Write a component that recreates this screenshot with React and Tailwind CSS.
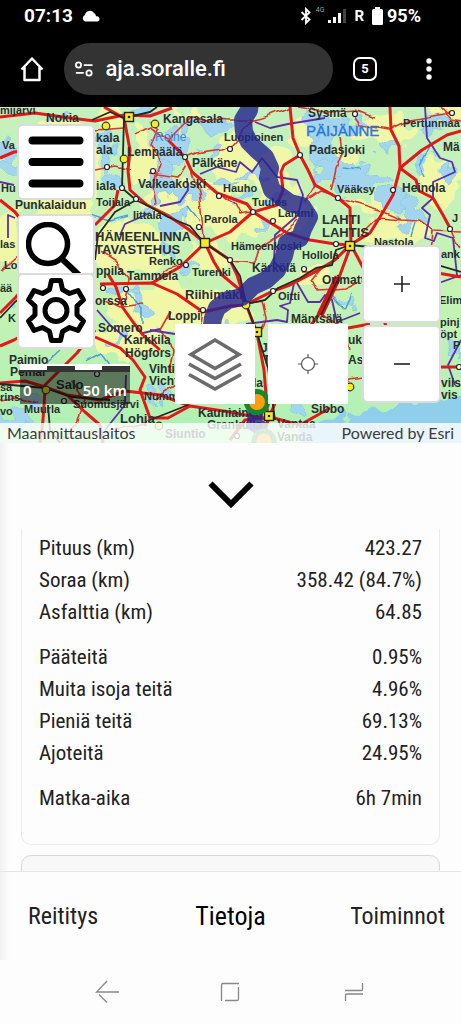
import React from "react";

const patches = [
  [190, 205, 45, 22], [232, 165, 24, 30], [275, 180, 22, 30], [180, 310, 70, 26], [130, 250, 40, 26], [395, 230, 38, 14],
  [385, 130, 34, 15], [60, 175, 40, 60], [143, 155, 12, 30], [440, 185, 20, 22], [290, 215, 22, 18],
  [240, 220, 34, 14], [302, 132, 14, 18], [125, 340, 34, 20], [312, 275, 16, 10], [445, 110, 24, 9], [8, 240, 12, 30],
  [215, 260, 24, 16], [110, 120, 14, 8], [345, 160, 12, 10], [195, 112, 18, 5], [370, 205, 18, 9], [110, 230, 12, 14],
];

const lakes = [
  [172, 150, 17, 21], [205, 125, 26, 7], [162, 180, 12, 20], [190, 195, 20, 7], [222, 185, 14, 6],
  [250, 178, 12, 4], [323, 150, 12, 22], [333, 172, 20, 15], [316, 124, 14, 15], [365, 180, 28, 9],
  [393, 202, 18, 10], [410, 212, 12, 13], [350, 124, 24, 6], [435, 125, 14, 5], [386, 148, 6, 6], [422, 168, 5, 8],
  [425, 160, 9, 4], [12, 165, 12, 8], [8, 150, 10, 7], [110, 150, 7, 22], [112, 180, 9, 7],
  [100, 135, 10, 5], [138, 298, 7, 12], [128, 291, 14, 3], [115, 340, 8, 3], [172, 222, 12, 9],
  [168, 246, 4, 13], [190, 272, 12, 3], [275, 196, 8, 4], [262, 225, 6, 3], [450, 170, 4, 7],
  [30, 400, 12, 5], [12, 420, 20, 6], [150, 402, 8, 4], [164, 392, 5, 9], [305, 407, 8, 5],
  [345, 303, 5, 4], [455, 350, 6, 12], [140, 112, 10, 4], [60, 118, 14, 3], [225, 330, 5, 7], [15, 305, 4, 5],
  [210, 150, 8, 3], [236, 200, 6, 3], [148, 210, 6, 4], [185, 212, 8, 5], [340, 200, 5, 3], [365, 165, 5, 3], [215, 340, 4, 4],
];

const majorRoads = [
  "M0 117L35 113L70 118L95 121L124 115L150 116L172 108",
  "M104 107L124 118L130 150L128 170L130 190L147 205L167 215L188 229L205 243L230 260L237 275L246 304L257 333L264 370L268 420L262 443",
  "M205 243L230 232L253 212L277 205L283 190L281 172L284 165L300 155L293 138L290 107",
  "M168 140L185 157L192 172L217 193L247 204L253 212L287 233L310 240L335 244L350 245L370 233L383 212L393 195L400 168L422 150L447 135L461 131",
  "M390 107L391 130L399 146L400 168L416 180L419 191L433 198L443 215L450 228",
  "M300 155L308 170L315 185L338 198L350 208L351 245L340 275L320 313L300 340L285 380L270 415",
  "M351 245L375 290L390 340",
  "M350 245L335 260L315 272L290 285L273 291L245 305L230 306L203 312L177 294L152 283L100 284",
  "M205 243L180 267L152 283",
  "M205 243L214 262L222 275L240 290L245 305",
  "M0 383L25 381L45 387L67 395L100 400L125 391L160 395L190 406L230 412L270 420",
  "M43 387L60 370L77 353L95 330", "M45 390L43 420L40 443", "M0 313L16 297L32 278",
  "M0 200L15 212L30 232", "M0 158L14 152L30 150", "M108 274L116 287L123 308L133 322L143 335L160 350",
  "M95 337L120 348L133 360L145 377L140 390L150 418L168 418L190 406",
  "M0 346L14 340L30 331", "M420 270L461 277", "M425 367L461 367", "M348 328L370 324",
  "M95 225L115 205L118 190", "M230 440L245 420L270 417L300 425L330 408",
  "M67 395L85 412L100 425L103 443",
];

const minorRoads = [
  "M185 157L195 153L222 149L232 145L252 120L265 117L290 107", "M192 172L199 190L202 220L205 243",
  "M150 122L158 130L152 146L160 165L153 185L156 205", "M150 174L178 178L186 165",
  "M338 198L383 212L402 220L420 221L433 230L461 231", "M340 137L342 152L336 168L331 192",
  "M315 185L305 202L320 192L338 198", "M230 260L255 262L261 248L282 234L298 220",
  "M350 245L378 218L402 220", "M355 115L362 125L390 130L410 120L450 113",
  "M100 252L115 262L128 278L125 300", "M222 195L235 205L240 215L250 213", "M152 283L168 270L180 267",
  "M245 305L262 300L266 318L262 330L250 335", "M303 270L320 270L312 280L318 292L345 290L360 283",
  "M20 255L12 262L0 270", "M135 135L150 128L168 140", "M95 170L115 166L130 170", "M95 130L124 128",
  "M170 312L160 330L174 350L170 372", "M62 443L75 425L85 400L70 380", "M155 398L175 385L180 360",
  "M335 390L350 380L362 378", "M300 107L330 112L355 110L375 118", "M432 230L430 250L420 262",
  "M0 400L15 398L38 404", "M110 430L140 424L152 418", "M203 310L200 330L180 345", "M440 107L452 120L461 122",
  "M320 313L345 330L350 350", "M450 228L455 240L461 248", "M168 140L190 118L230 120L252 120", "M102 300L118 308L145 305",
];

const rails = [
  "M124 118L122 188L136 200L150 207L168 217L190 226L200 238L212 248L230 260L240 276L246 304L256 330L268 368L275 420",
  "M136 200L115 212L98 235L95 260", "M246 304L265 300L278 288L300 278L316 268L332 265L336 250L350 245L380 248L461 272",
  "M0 384L45 388L72 397L110 400", "M0 318L15 302L30 290", "M48 405L50 430L60 443", "M150 420L188 405", "M92 120L110 112L124 118L150 112L157 107",
];

const borders = [
  "M255 122L270 128L288 124L325 118", "M200 174L217 167L236 172L240 162L252 172L262 158L277 177L297 180L303 195L298 215L275 235L274 262L283 270",
  "M425 107L427 138L440 158L452 162L455 172L433 182L433 198L422 208L430 215L425 238L434 241L437 233L453 238L457 275",
  "M0 182L14 185", "M8 238L8 215L15 218", "M150 330L175 334", "M246 324L277 320L287 322L288 310L280 306L290 303L294 283",
  "M297 283L308 302L320 302L325 295L332 300L337 322L360 313", "M97 310L110 325L125 337", "M120 235L125 224L150 213", "M160 206L180 202L188 190L187 178",
  "M143 333L160 329", "M461 340L448 365L455 385", "M105 430L125 405L126 375", "M425 288L461 275",
];

const streams = [
  "M88 214L110 220L128 215", "M343 168L360 170", "M188 207L200 222", "M127 290L143 310L143 325",
  "M430 145L420 165L424 175", "M415 222L411 235", "M330 295L345 310L352 295", "M40 370L60 352", "M85 362L100 354L112 370",
];

const smallLabels = [
  [0, 114, "mijärvi"], [2, 149, "Va"], [1, 192, "Hu"], [0, 248, "las"], [4, 269, "Lo"], [0, 292, "ää"], [8, 322, "K"],
  [224, 141, "Luopioinen"], [223, 192, "Hauho"], [252, 206, "Tuulos"], [278, 217, "Lammi"], [204, 223, "Parola"],
  [133, 219, "Iittala"], [96, 206, "Toijala"], [231, 250, "Hämeenkoski"], [192, 276, "Turenki"], [149, 265, "Renko"],
  [278, 300, "Oitti"], [337, 193, "Vääksy"], [374, 246, "Nastola"], [302, 259, "Hollola"], [452, 222, "J"], [441, 258, "ank"],
  [144, 400, "Nummela"], [73, 408, "Suomusjärvi"], [24, 413, "Muurla"], [403, 127, "Pertunmaa"], [439, 304, "Elim"],
  [440, 338, "öpt"], [440, 326, "pinj"], [453, 349, "P"], [0, 391, "sa"], [0, 401, "rins"], [0, 415, "vo"],
];

const largeLabels = [
  [46, 122, "Nokia"], [163, 123, "Kangasala"], [127, 156, "Lempäälä"], [192, 167, "Pälkäne"], [138, 188, "Valkeakoski"],
  [15, 209, "Punkalaidun"], [96, 142, "kala"], [96, 154, "ala"], [96, 190, "iala"], [96, 275, "ppila"], [252, 272, "Kärkölä"],
  [127, 280, "Tammela"], [95, 305, "orssa"], [168, 320, "Loppi"], [291, 323, "Mäntsälä"], [322, 284, "Orimattila"],
  [98, 332, "Somero"], [124, 344, "Karkkila"], [125, 357, "Högfors"], [149, 373, "Vihti"], [149, 385, "Vichtis"],
  [9, 364, "Paimio"], [10, 376, "Pemar"], [198, 417, "Kauniainen"], [207, 429, "Grankulla"],
  [261, 352, "Jä"], [263, 364, "Tu"], [253, 387, "la"], [311, 413, "Sibbo"], [348, 344, "uk"], [348, 364, "As"],
  [308, 117, "Sysmä"], [309, 154, "Padasjoki"], [443, 151, "Mä"], [402, 192, "Heinola"],
  [441, 387, "viis"], [441, 399, "vis"], [165, 438, "Siuntio"], [277, 428, "Vantaa"], [277, 441, "Vanda"],
];

const yellowTowns = [[106, 126], [155, 124], [124, 159], [46, 390], [246, 305], [159, 426], [350, 387]];
const whiteTowns = [[122, 188], [136, 199], [153, 171], [107, 167], [185, 157], [230, 149], [219, 196], [253, 212], [273, 221], [199, 227], [230, 260], [186, 265], [203, 310], [273, 291], [103, 288], [126, 289], [300, 155], [338, 198], [393, 190], [336, 244], [450, 229], [355, 114], [452, 113], [304, 269], [64, 401], [97, 374], [237, 436], [459, 367]];
const squares = [[129, 117], [205, 243], [350, 246], [257, 332], [269, 416]];

function MapCanvas() {
  return (
    <svg className="block h-full w-full" viewBox="0 107 461 336" preserveAspectRatio="xMidYMid slice" role="img" aria-label="Reittikartta">
      <defs>
        <filter id="coast" x="-20%" y="-20%" width="140%" height="140%" colorInterpolationFilters="sRGB">
          <feTurbulence type="fractalNoise" baseFrequency="0.05" numOctaves="2" seed="7" />
          <feDisplacementMap in="SourceGraphic" scale="34" xChannelSelector="R" yChannelSelector="G" />
        </filter>
        <filter id="bend" colorInterpolationFilters="sRGB">
          <feTurbulence type="fractalNoise" baseFrequency="0.06" numOctaves="1" seed="3" />
          <feDisplacementMap in="SourceGraphic" scale="8" xChannelSelector="R" yChannelSelector="G" />
        </filter>
        <linearGradient id="land" x1="0" y1="0" x2="0" y2="1">
          <stop offset="0" stopColor="#c4f0bd" />
          <stop offset="0.55" stopColor="#c6f3b4" />
          <stop offset="1" stopColor="#aef0b4" />
        </linearGradient>
      </defs>
      <rect x="0" y="107" width="461" height="336" fill="url(#land)" />
      <g filter="url(#coast)">
        {patches.map(([x, y, rx, ry], i) => <ellipse key={i} cx={x} cy={y} rx={rx} ry={ry} fill="#f0f8a8" />)}
        {lakes.map(([x, y, rx, ry], i) => <ellipse key={i} cx={x} cy={y} rx={rx} ry={ry} fill="#a3d6ee" stroke="#84c6e6" strokeWidth="0.8" />)}
        <path d="M480 392L430 400L405 400L385 412L365 406L350 418L335 413L330 423L300 430L290 470H490Z" fill="#8fcfec" />
      </g>
      <g fill="none" strokeLinejoin="round" filter="url(#bend)">
        {streams.map((d) => <path key={d} d={d} stroke="#4d9fd8" strokeWidth="1.5" />)}
        {minorRoads.map((d) => <path key={d} d={d} stroke="#e0342a" strokeWidth="1.6" />)}
      </g>
      <g fill="none" strokeLinejoin="round">
        {borders.map((d) => <path key={d} d={d} stroke="#5a2fa8" strokeWidth="1.8" />)}
        {majorRoads.map((d) => <path key={d} d={d} stroke="#e41818" strokeWidth="3" />)}
        {rails.map((d) => <path key={d} d={d} stroke="#222b22" strokeWidth="1.8" />)}
        <path d="M338 277L320 315" stroke="#d41414" strokeWidth="7" />
        <path d="M339 277L321 315" stroke="#222" strokeWidth="1.5" />
      </g>
      {whiteTowns.map(([x, y], i) => <circle key={i} cx={x} cy={y} r="2.5" fill="#fff" stroke="#222" strokeWidth="1.2" />)}
      {yellowTowns.map(([x, y], i) => <circle key={i} cx={x} cy={y} r="3.8" fill="#f5ec1c" stroke="#333" strokeWidth="1.2" />)}
      {squares.map(([x, y], i) => (
        <g key={i}>
          <rect x={x - 4.5} y={y - 4.5} width="9" height="9" fill="#f7e91f" stroke="#222" strokeWidth="1.4" />
          {i !== 1 && <circle cx={x} cy={y} r="1.3" fill="#222" />}
        </g>
      ))}
      <g fontFamily="Liberation Sans, Arial, sans-serif" fontWeight="700" fill="#2a2e30">
        <g fontSize="11">{smallLabels.map(([x, y, t]) => <text key={`${t}${x}-${y}`} x={x} y={y}>{t}</text>)}</g>
        <g fontSize="12">{largeLabels.map(([x, y, t]) => <text key={`${t}${x}-${y}`} x={x} y={y}>{t}</text>)}</g>
        <g fontSize="13">
          <text x="95" y="241">HÄMEENLINNA</text>
          <text x="95" y="254">TAVASTEHUS</text>
          <text x="322" y="224">LAHTI</text>
          <text x="322" y="237">LAHTIS</text>
          <text x="56" y="389">Salo</text>
          <text x="185" y="299">Riihimäki</text>
          <text x="120" y="423">Lohja</text>
        </g>
        <text x="306" y="136" fontSize="15" fontWeight="400" fill="#2b74e0" stroke="#2b74e0" strokeWidth="0.4">PÄIJÄNNE</text>
        <text x="155" y="141" fontSize="12" fontWeight="400" fill="#3b83dc">Roine</text>
      </g>
      <path
        d="M251 95L249 110L243 120L244 132L249 142L257 150L265 157L270 168L268 178L272 190L279 195L290 203L302 206L309 217L303 229L300 238L287 243L284 256L277 270L266 280L253 286L242 297L228 300L217 308L213 318L211 332"
        fill="none" stroke="#25258f" strokeOpacity="0.82" strokeWidth="18" strokeLinejoin="round"
      />
      <path d="M257 404L254 424L264 430" fill="none" stroke="#25258f" strokeOpacity="0.8" strokeWidth="15" />
      <circle cx="257" cy="402" r="10.5" fill="#ff9d12" stroke="#128a2c" strokeWidth="5" />
      <circle cx="264" cy="441" r="10" fill="#ffb22e" stroke="#3aa34a" strokeWidth="5" />
    </svg>
  );
}

const groups = [
  [["Pituus (km)", "423.27"], ["Soraa (km)", "358.42 (84.7%)"], ["Asfalttia (km)", "64.85"]],
  [["Pääteitä", "0.95%"], ["Muita isoja teitä", "4.96%"], ["Pieniä teitä", "69.13%"], ["Ajoteitä", "24.95%"]],
  [["Matka-aika", "6h 7min"]],
];

const mapButton = "flex items-center justify-center bg-white text-black";
const framed = "rounded-md border-2 border-[#dcdcdc]";

function StatusBar() {
  return (
    <div className="flex h-8 items-center justify-between pr-10 pl-6 text-[19px] leading-6 font-bold">
      <div className="flex items-center gap-2">
        <span>07:13</span>
        <svg width="20" height="14" viewBox="0 0 20 14" fill="#fff" aria-hidden="true">
          <path d="M4 12.500a3.500 3.500 0 0 1 0-6.500A5 5 0 0 1 13 4a4 4 0 0 1 2 3.300A2.700 2.700 0 0 1 16.500 12.500Z" />
        </svg>
      </div>
      <div className="flex items-center gap-1">
        <svg width="12" height="18" viewBox="0 0 12 18" fill="none" stroke="#fff" strokeWidth="1.800" aria-hidden="true">
          <path d="M1.500 5l8 7.500L6 16V2l3.500 3.500-8 7.500" />
        </svg>
        <span className="self-start text-[7px] leading-3 font-normal text-gray-400">4G</span>
        <svg width="18" height="14" viewBox="0 0 18 14" aria-hidden="true">
          <path d="M0 11h3v3H0zM5 8h3v6H5zM10 4h3v10h-3z" fill="#fff" />
          <path d="M15 0h3v14h-3z" fill="#444" />
        </svg>
        <span className="px-1 text-[15px]">R</span>
        <svg width="11" height="18" viewBox="0 0 11 18" fill="#fff" aria-hidden="true">
          <path d="M3 0h5v2h1.500A1.500 1.500 0 0 1 11 3.500v13A1.500 1.500 0 0 1 9.500 18h-8A1.500 1.500 0 0 1 0 16.500v-13A1.500 1.500 0 0 1 1.500 2H3z" />
        </svg>
        <span className="text-[18px]">95%</span>
      </div>
    </div>
  );
}

function BrowserBar() {
  return (
    <div className="flex items-center py-[11px] pr-5 pl-5">
      <button type="button" aria-label="Koti" className="flex w-6 justify-center">
        <svg width="24" height="26" viewBox="0 0 24 26" fill="none" stroke="#fff" strokeWidth="2.500" strokeLinejoin="round">
          <path d="M1.500 13.500L12 2.500l10.500 11M4.500 11v13h15V11" />
        </svg>
      </button>
      <div className="ml-5 flex h-[52px] flex-1 items-center gap-3 rounded-full bg-[#333] px-[11px]">
        <svg width="21" height="18" viewBox="0 0 21 18" fill="none" stroke="#fff" strokeWidth="2" aria-hidden="true">
          <circle cx="4" cy="4.500" r="3" /><path d="M10 4.500h10M1 13.500h9" /><circle cx="16" cy="13.500" r="3" />
        </svg>
        <input aria-label="Osoite" defaultValue="aja.soralle.fi" className="w-full min-w-0 bg-transparent text-[22px] leading-7 font-medium outline-none" />
      </div>
      <button type="button" aria-label="Välilehdet" className="ml-5 flex size-6 items-center justify-center rounded-[7px] border-2 border-white text-[13px] leading-4 font-bold">5</button>
      <button type="button" aria-label="Valikko" className="ml-10 flex w-6 justify-center">
        <svg width="6" height="22" viewBox="0 0 6 22" fill="#fff"><circle cx="3" cy="3" r="2.700" /><circle cx="3" cy="11" r="2.700" /><circle cx="3" cy="19" r="2.700" /></svg>
      </button>
    </div>
  );
}

export default function App() {
  return (
    <div className="flex min-h-screen flex-col bg-[#fdfdfd] font-['Roboto',sans-serif] text-[#222]">
      <header className="bg-black pb-px text-white">
        <StatusBar />
        <BrowserBar />
      </header>

      <section className="relative h-[336px] overflow-hidden">
        <MapCanvas />
        <div className="absolute top-[17px] left-[17px] flex flex-col">
          <button type="button" aria-label="Avaa valikko" className={`${mapButton} ${framed} h-[76px] w-[78px]`}>
            <svg width="56" height="54" viewBox="0 0 56 54" stroke="#000" strokeWidth="8" strokeLinecap="round"><path d="M4.500 5.500h47M4.500 27h47M4.500 48.500h47" /></svg>
          </button>
          <button type="button" aria-label="Haku" className="mt-[14px] flex h-[59px] w-[78px] items-start justify-center overflow-hidden rounded-t-md border-2 border-b-0 border-[#dcdcdc] bg-white pt-[6px]">
            <svg width="60" height="58" viewBox="0 0 60 58" fill="none" stroke="#000" strokeWidth="5.500"><circle cx="22" cy="22" r="19.500" /><path d="M35 36L54 54" strokeWidth="6" /></svg>
          </button>
          <button type="button" aria-label="Asetukset" className={`${mapButton} ${framed} h-[76px] w-[78px]`}>
            <svg width="66" height="68" viewBox="0 0 66 68" fill="none" stroke="#000" strokeWidth="5" strokeLinejoin="round">
              <path d="M28.500 3.500h9l2 9 7 4 8.500-3 5.500 9.500-6.500 6v9l6.500 6-5.500 9.500-8.500-3-7 4-2 9h-9l-2-9-7-4-8.500 3-5.500-9.500 6.500-6v-9l-6.500-6L11 13.500l8.500 3 7-4z" />
              <circle cx="33" cy="33.500" r="11" />
            </svg>
          </button>
        </div>
        <div className="absolute top-[257px] left-5 w-[110px]">
          <svg className="block h-2 w-full" viewBox="0 0 110 8" preserveAspectRatio="none" aria-hidden="true">
            <path d="M0 0h110v8H0z" fill="#333" />
            <path d="M0 0h110v2H0zM0 2h27v4H0zM55 2h27v4H55z" fill="#fff" />
          </svg>
          <div className="flex h-8 items-center justify-between bg-black/50 px-[3px] pt-1 font-['Noto_Sans',sans-serif] text-[15px] leading-5 font-semibold text-white"><span>0</span><span>50 km</span></div>
        </div>
        <div className="absolute right-[113px] bottom-[39px] flex gap-[13px]">
          <button type="button" aria-label="Karttatasot" className={`${mapButton} size-20`}>
            <svg width="56" height="54" viewBox="0 0 56 54" fill="none" stroke="#6b6b6b" strokeWidth="3.500"><path d="M28 3L52 17.500 28 31.500 4 17.500zM2 27l26 14.500L54 27M2 37.500L28 52l26-14.500" /></svg>
          </button>
          <button type="button" aria-label="Paikanna" className={`${mapButton} size-20`}>
            <svg width="20" height="20" viewBox="0 0 20 20" fill="none" stroke="#555" strokeWidth="1.200"><circle cx="10" cy="10" r="6.500" /><path d="M10 0v4M10 16v4M0 10h4M16 10h4" /></svg>
          </button>
        </div>
        <div className="absolute right-5 bottom-10 flex flex-col gap-[2px]">
          <button type="button" aria-label="Lähennä" className={`${mapButton} ${framed} h-[78px] w-[79px]`}>
            <svg width="16" height="16" viewBox="0 0 16 16" stroke="#222" strokeWidth="1.600"><path d="M8 0v16M0 8h16" /></svg>
          </button>
          <button type="button" aria-label="Loitonna" className={`${mapButton} ${framed} h-[78px] w-[79px]`}>
            <svg width="16" height="16" viewBox="0 0 16 16" stroke="#222" strokeWidth="1.600"><path d="M0 8h16" /></svg>
          </button>
        </div>
        <div className="absolute inset-x-0 bottom-0 flex h-5 items-center justify-between bg-white/80 px-[7px] font-['Lato',sans-serif] text-[16px] leading-5 text-[#3c3c3c]">
          <span>Maanmittauslaitos</span><span>Powered by Esri</span>
        </div>
      </section>

      <main className="flex flex-col bg-linear-to-r from-[#f1f1f1] to-[#fdfdfd] to-[9px] font-['Roboto_Condensed','Roboto',sans-serif]">
        <button type="button" aria-label="Pienennä" className="flex h-[86px] items-center justify-center pt-[18px]">
          <svg width="46" height="28" viewBox="0 0 46 28" fill="none" stroke="#000" strokeWidth="6"><path d="M2.500 2.500L23 23 43.500 2.500" /></svg>
        </button>
        <div className="h-[342px] overflow-hidden px-[21px]">
          <div className="flex flex-col gap-[13px] rounded-b-[10px] border border-t-0 border-[#ececec] bg-[#fdfdfd] px-[17px] pt-[3px] pb-[30px] text-[21px] leading-8">
            {groups.map((rows) => (
              <table key={rows[0][0]} className="w-full">
                <tbody>
                  {rows.map(([name, value]) => (
                    <tr key={name}>
                      <th scope="row" className="p-0 text-left font-normal">{name}</th>
                      <td className="p-0 text-right">{value}</td>
                    </tr>
                  ))}
                </tbody>
              </table>
            ))}
          </div>
          <div className="mt-[10px] h-10 rounded-[10px] border border-[#d8d8d8] bg-[#f8f8f8]" />
        </div>
        <nav className="grid h-[89px] grid-cols-3 items-center border-t border-[#e6e6e6] px-4 text-[24px] leading-8">
          <button type="button" className="pl-3 text-left">Reititys</button>
          <button type="button" aria-current="page" className="text-[26px] text-black">Tietoja</button>
          <button type="button" className="text-right">Toiminnot</button>
        </nav>
      </main>

      <footer className="grid h-16 grid-cols-3 items-center justify-items-center px-[45px]">
        <button type="button" aria-label="Takaisin"><svg width="24" height="24" viewBox="0 0 24 24" fill="none" stroke="#888" strokeWidth="1.300"><path d="M12 1L1.500 12H24M4 14.500l8 8" /></svg></button>
        <button type="button" aria-label="Aloitusnäyttö"><svg width="20" height="20" viewBox="0 0 20 20" fill="none" stroke="#888" strokeWidth="1.300"><path d="M1.500 19V3q0-1.500 1.500-1.500h16M18.500 5v12q0 1.500-1.500 1.500H5" /></svg></button>
        <button type="button" aria-label="Viimeisimmät"><svg width="20" height="20" viewBox="0 0 20 20" fill="none" stroke="#888" strokeWidth="1.300"><path d="M18.500 1v6.500q0 1-1 1H1M19 12H3q-1.500 0-1.500 1.500V19" /></svg></button>
      </footer>
    </div>
  );
}
